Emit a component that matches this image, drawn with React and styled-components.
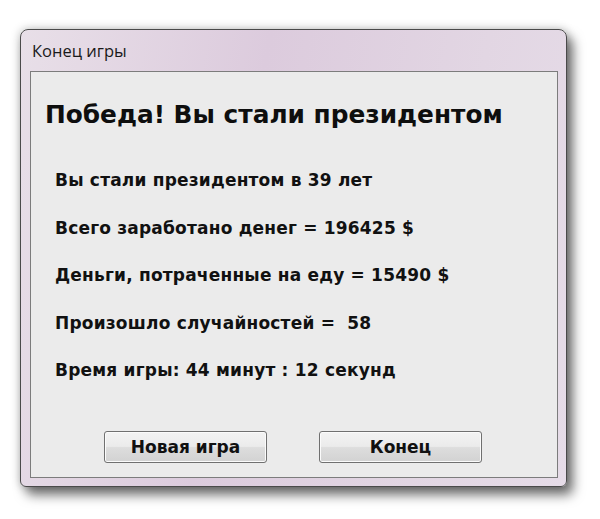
import React from "react";
import styled, { createGlobalStyle } from "styled-components";

const Global = createGlobalStyle`
  body {
    margin: 0;
    background: #ffffff;
    font-family: "Liberation Sans", Arial, sans-serif;
  }
`;

const Page = styled.div`
  width: 600px;
  height: 519px;
  padding: 29px 0 0 20px;
  box-sizing: border-box;
`;

const Window = styled.div`
  width: 547px;
  height: 458px;
  box-sizing: border-box;
  border: 1px solid #4a4a4a;
  border-radius: 8px 8px 6px 6px;
  background: linear-gradient(100deg, #e8dfe8 0%, #dccbdd 40%, #e2d6e3 75%, #e6dce8 100%);
  box-shadow: 6px 8px 12px rgba(0, 0, 0, 0.55), 0 0 10px rgba(0, 0, 0, 0.25);
  display: flex;
  flex-direction: column;
  padding: 0 8px 8px 9px;
`;

const TitleBar = styled.div`
  height: 41px;
  display: flex;
  align-items: center;
  padding-left: 2px;
  padding-bottom: 1px;
  box-sizing: border-box;
  font-family: "Open Sans", "Noto Sans", sans-serif;
  font-size: 16.5px;
  color: #1a1a1a;
`;

const Client = styled.div`
  flex: 1;
  background: #ebebeb;
  border: 1px solid #7c7c7c;
  display: flex;
  flex-direction: column;
  padding: 28px 0 0 14px;
`;

const Heading = styled.h1`
  margin: 0;
  font-family: "DejaVu Sans", sans-serif;
  font-weight: bold;
  font-size: 24.8px;
  line-height: 30px;
  color: #0e0e0e;
`;

const Stats = styled.div`
  display: flex;
  flex-direction: column;
  gap: 27px;
  padding: 40px 0 0 10px;
`;

const Stat = styled.div`
  font-family: "DejaVu Sans", sans-serif;
  font-weight: bold;
  font-size: 17px;
  letter-spacing: 0.2px;
  line-height: 20.5px;
  color: #111;
`;

const Buttons = styled.div`
  margin-top: auto;
  display: flex;
  gap: 52px;
  padding: 0 0 14px 59px;
`;

const Button = styled.button`
  width: 163px;
  height: 32px;
  border: 1px solid #707070;
  border-radius: 3px;
  background: linear-gradient(#f3f3f3 0%, #ebebeb 48%, #dddddd 52%, #d2d2d2 100%);
  box-shadow: inset 0 0 0 1px #fbfbfb;
  font-family: "DejaVu Sans", sans-serif;
  font-weight: bold;
  font-size: 17px;
  color: #111;
  padding: 0;
`;

const stats = [
  "Вы стали президентом в 39 лет",
  "Всего заработано денег = 196425 $",
  "Деньги, потраченные на еду = 15490 $",
  "Произошло случайностей =  58",
  "Время игры: 44 минут : 12 секунд",
];

export default function App() {
  return (
    <Page>
      <Global />
      <Window>
        <TitleBar>Конец игры</TitleBar>
        <Client>
          <Heading>Победа! Вы стали президентом</Heading>
          <Stats>
            {stats.map((s, i) => (
              <Stat key={i}>{s.replace("  ", "\u00a0 ")}</Stat>
            ))}
          </Stats>
          <Buttons>
            <Button>Новая игра</Button>
            <Button>Конец</Button>
          </Buttons>
        </Client>
      </Window>
    </Page>
  );
}
